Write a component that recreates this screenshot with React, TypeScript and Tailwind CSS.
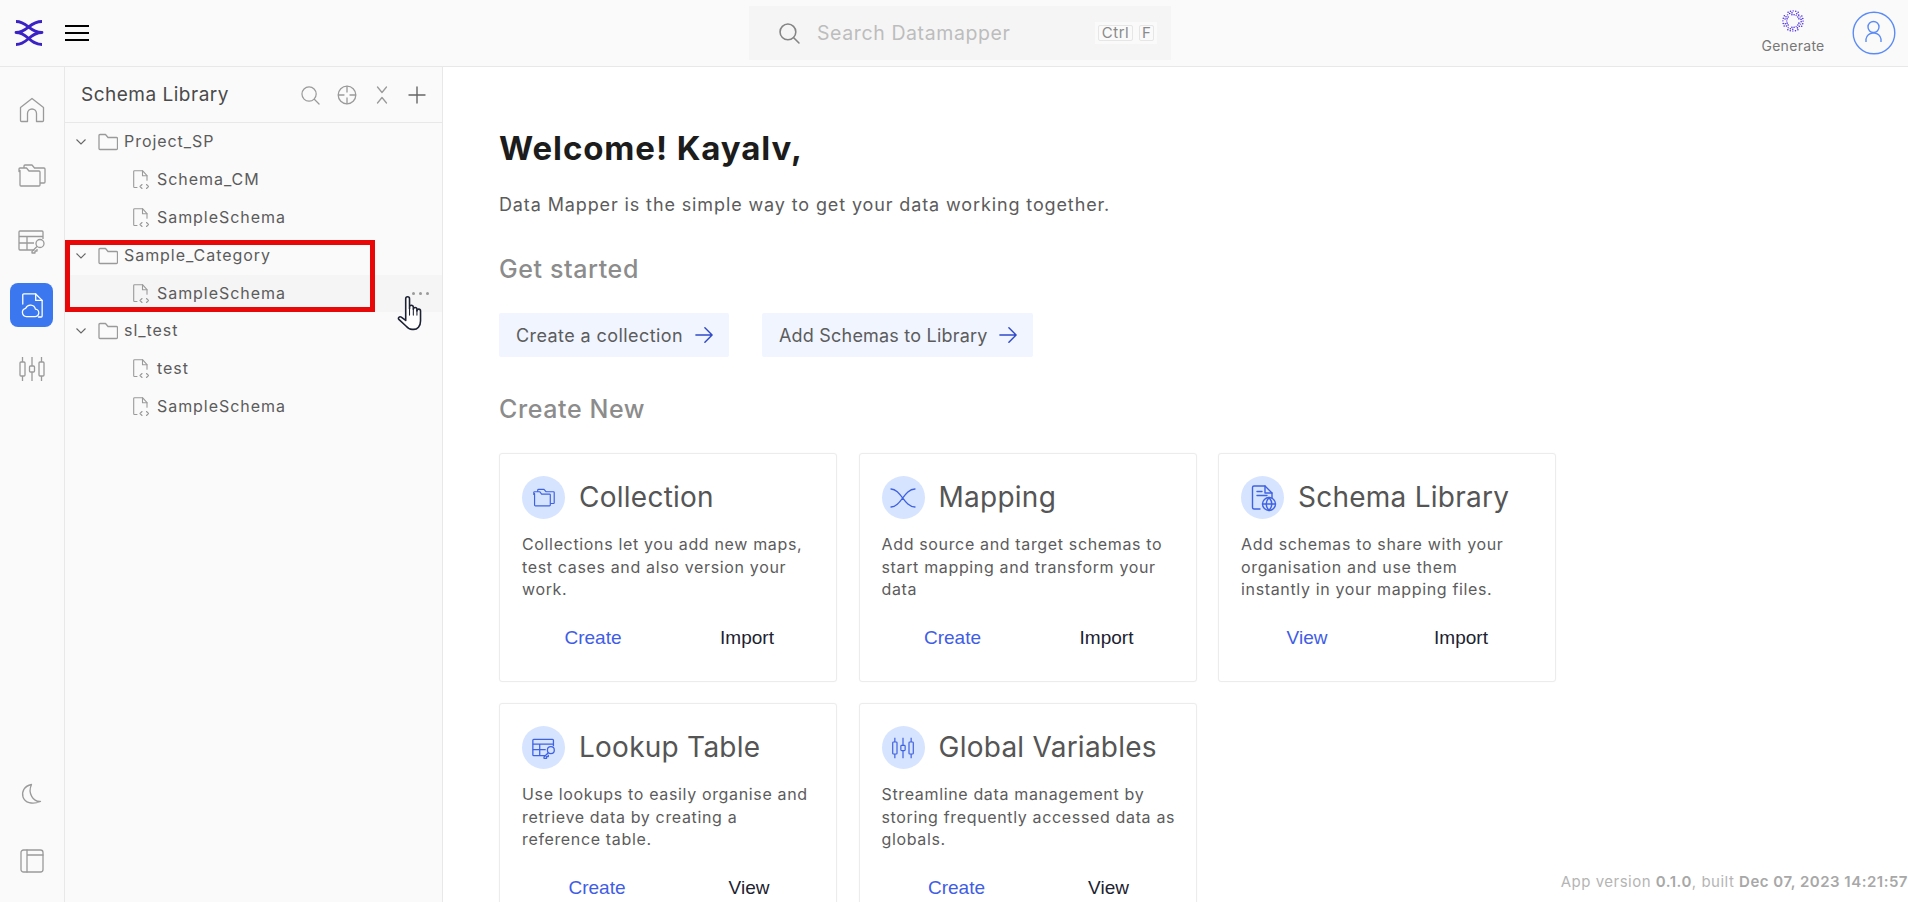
import React from "react";

const G = "#9a9a9a";
const B = "#3f62e0";

function Svg({ s, w, h, c = G, sw = 1.3, children }: any) {
  return (
    <svg width={s ?? w} height={s ?? h} viewBox={`0 0 ${s ?? w} ${s ?? h}`} fill="none" stroke={c} strokeWidth={sw} strokeLinecap="round" strokeLinejoin="round" className="shrink-0 block">
      {children}
    </svg>
  );
}

const Logo = () => (
  <Svg w={30} h={30} c="#3a22c4" sw={2.8}>
    <g strokeLinecap="butt">
      <path d="M28 3.500C15 3.500 14 14.500 2 14.500C14 14.500 15 26.500 28 26.500" />
      <path d="M2 3.500C14 3.500 15 14.500 28 14.500C15 14.500 14 26.500 2 26.500" />
    </g>
  </Svg>
);

const Burger = () => (
  <Svg w={24} h={18} c="#000" sw={2}>
    <g strokeLinecap="butt">
      <path d="M0 2h24M0 9h24M0 16h24" />
    </g>
  </Svg>
);

const Home = () => (
  <Svg s={26}>
    <path d="M1.500 10.500L13 1.500l11.500 9v13a1 1 0 0 1-1 1h-6v-8a3.500 3.500 0 0 0-9 0v8h-6a1 1 0 0 1-1-1z" />
  </Svg>
);
const Folders = ({ c = G, size = 28, sw = 1.3 }: any) => (
  <svg width={size} height={size} viewBox="0 0 28 28" fill="none" stroke={c} strokeWidth={sw} strokeLinejoin="round" className="shrink-0 block">
    <path d="M1 9.500a1 1 0 0 1 1-1h0V23a1 1 0 0 0 1 1h18a1 1 0 0 0 1-1V10a1 1 0 0 0-1-1H11L8.500 6H2a1 1 0 0 0-1 1z" />
    <path d="M6 6V4a1 1 0 0 1 1-1h7l2.500 3H26a1 1 0 0 1 1 1v13a1 1 0 0 1-1 1h-4" />
  </svg>
);
const TableKey = ({ c = G, size = 28, sw = 1.3 }: any) => (
  <svg width={size} height={size} viewBox="0 0 28 28" fill="none" stroke={c} strokeWidth={sw} strokeLinejoin="round" className="shrink-0 block">
    <path d="M16 23H2a1 1 0 0 1-1-1V5a1 1 0 0 1 1-1h22a1 1 0 0 1 1 1v7" />
    <path d="M1 9.500h24M1 16h15M9 9.500V23" />
    <circle cx="22" cy="16.500" r="4" />
    <path d="M19 19.500l-5 5v1.500h3v-2h2v-2" />
  </svg>
);
const Sliders = ({ c = G, size = 28, sw = 1.3 }: any) => (
  <svg width={size} height={size} viewBox="0 0 28 28" fill="none" stroke={c} strokeWidth={sw} strokeLinejoin="round" className="shrink-0 block">
    <rect x="2" y="7" width="5" height="14" rx="1" />
    <path d="M4.500 2v5M4.500 21v5" />
    <rect x="11.500" y="11" width="5" height="6" rx="1" />
    <path d="M14 2v9M14 17v9" />
    <rect x="21" y="7" width="5" height="14" rx="1" />
    <path d="M23.500 2v5M23.500 21v5" />
  </svg>
);
const SchemaActive = () => (
  <svg width="24" height="26" viewBox="0 0 26 28" fill="none" stroke="#fff" strokeWidth="1.400" strokeLinecap="round" strokeLinejoin="round" className="shrink-0 block">
    <path d="M3 13V3a1 1 0 0 1 1-1h13l7 7v17a1 1 0 0 1-1 1h-3" />
    <path d="M17 2v7h7" />
    <path d="M7 26.500a4.500 4.500 0 0 1-.8-8.900A5.500 5.500 0 0 1 16.700 18.500a4 4 0 0 1-.7 8z" />
  </svg>
);
const Moon = () => (
  <Svg s={22}>
    <path d="M10.500 1.500C3 3 .5 9 2 14c1.700 5.500 9 8 17.500 4.500C12 19 6.500 10 10.500 1.500z" />
  </Svg>
);
const LayoutIcon = () => (
  <Svg s={24}>
    <rect x="1" y="1" width="22" height="22" rx="2.500" />
    <path d="M7 1v22M7 6h16" />
  </Svg>
);
const Search = ({ s = 18, c = G, sw = 1.3 }: any) => (
  <svg width={s} height={s} viewBox="0 0 20 20" fill="none" stroke={c} strokeWidth={sw} strokeLinecap="round" className="shrink-0 block">
    <circle cx="8.500" cy="8.500" r="7.500" />
    <path d="M14 14l5 5" />
  </svg>
);
const Target = () => (
  <Svg s={20}>
    <circle cx="10" cy="10" r="8.800" />
    <path d="M10 1.500v5.500M10 13v5.500M1.500 10H7M13 10h5.500" />
  </Svg>
);
const Collapse = () => (
  <Svg s={18}>
    <path d="M4.500 1l4.500 5.500L13.500 1M4.500 17L9 11.500 13.500 17" />
  </Svg>
);
const Plus = () => (
  <Svg s={18} c="#666" sw={1.4}>
    <path d="M9 1v16M1 9h16" />
  </Svg>
);
const Chevron = () => (
  <svg width="10" height="6" viewBox="0 0 10 6" fill="none" stroke="#666" strokeWidth="1.100" className="shrink-0 block">
    <path d="M.5.500L5 5l4.500-4.500" />
  </svg>
);
const Folder = () => (
  <Svg w={20} h={18}>
    <path d="M1 2.500a1 1 0 0 1 1-1h5.500l2.500 3h8.500a1 1 0 0 1 1 1v10a1 1 0 0 1-1 1H2a1 1 0 0 1-1-1z" strokeLinecap="butt" />
  </Svg>
);
const FileCode = () => (
  <Svg w={18} h={20} sw={1.1}>
    <path d="M4 17.500H1.500a.8.800 0 0 1-.8-.800V1.500a.8.800 0 0 1 .8-.800H9.500l4.500 5v4.500" />
    <path d="M9.500.700v5h4.500" />
    <path d="M9 14.500l-2 2 2 2M13.500 14.500l2 2-2 2" />
  </Svg>
);
const MappingIcon = () => (
  <Svg s={26} c={B} sw={1.3}>
    <path d="M1 4c10 0 13 18 24 18M25 4C14 4 11 22 1 22" />
  </Svg>
);
const DocGlobe = () => (
  <Svg s={30} c={B} sw={1.4}>
    <path d="M12 26H6a1.500 1.500 0 0 1-1.500-1.500v-20A1.500 1.500 0 0 1 6 3h11l7 7v5" />
    <path d="M17 3v7h7M9 8.500h5M9 12.500h10" />
    <circle cx="21" cy="21" r="6.500" />
    <path d="M14.500 21h13M21 14.500c-3.500 4-3.500 9 0 13M21 14.500c3.500 4 3.500 9 0 13" />
  </Svg>
);
const ArrowR = () => (
  <svg width="18" height="18" viewBox="0 0 20 20" fill="none" stroke="#2f49c8" strokeWidth="1.600" strokeLinecap="round" strokeLinejoin="round" className="shrink-0 block">
    <path d="M1 10h17.500M11 2l8 8-8 8" />
  </svg>
);
const User = () => (
  <svg width="44" height="44" viewBox="0 0 44 44" fill="none" stroke="#5b8cf5" strokeWidth="1.400" className="shrink-0 block">
    <circle cx="22" cy="22" r="20.800" />
    <circle cx="21.500" cy="16" r="5.500" />
    <path d="M14 31v-3a7 7 0 0 1 7-6h1a7 7 0 0 1 7 6v3" />
  </svg>
);

function GenerateDots() {
  const dots: React.ReactElement[] = [];
  for (let r = 0; r < 3; r++) {
    const rad = 6.3 + r * 1.9;
    const n = 18 + r * 3;
    for (let i = 0; i < n; i++) {
      const a = (i / n) * Math.PI * 2 + r * 0.4;
      if ((i * 7 + r * 3) % 6 === 0) continue;
      dots.push(<circle key={`${r}-${i}`} cx={11 + rad * Math.cos(a)} cy={11 + rad * Math.sin(a)} r={0.78} fill={i % 3 === 0 ? "#8a6cf0" : "#4a2be0"} />);
    }
  }
  return <svg width="22" height="22" viewBox="0 0 22 22" className="block shrink-0">{dots}</svg>;
}

const Hand = () => (
  <svg width="28" height="36" viewBox="0 0 26 34" className="block" fill="#fff" stroke="#1d2233" strokeWidth="1.500" strokeLinejoin="round" strokeLinecap="round">
    <path d="M8 19V3.500a1.800 1.800 0 0 1 3.600 0V13l0-1.500a1.800 1.800 0 0 1 3.600 0V13.500a1.700 1.700 0 0 1 3.400 0V15a1.700 1.700 0 0 1 3.400 0v9.500c0 5-3 8-6.500 8h-1.500c-2.500 0-4-1.200-5.500-3L1.500 23c-1-1.300.7-3.200 2.300-2.100L8 24z" />
    <path d="M11.600 12v7M15.200 13v6M18.600 14.500V19" fill="none" strokeWidth="1" />
  </svg>
);

function FolderRow({ name }: { name: string }) {
  return (
    <div className="h-[37.9px] flex items-center relative">
      <div className="ml-[11px]"><Chevron /></div>
      <div className="ml-[12px]"><Folder /></div>
      <span className="ml-[6px] pb-[2px] text-[16px] tracking-[0.95px] text-[#5c5c5c] whitespace-nowrap">{name}</span>
    </div>
  );
}

function FileRow({ name, hover }: { name: string; hover?: boolean }) {
  return (
    <div className={`h-[37.9px] flex items-center pl-[68px] gap-[6px] relative ${hover ? "bg-[#f5f5f5]" : ""}`}>
      <FileCode />
      <span className="pb-[2px] text-[16px] tracking-[0.95px] text-[#5c5c5c]">{name}</span>
      {hover && (
        <div className="absolute left-[347px] top-[17px] flex gap-[4px]">
          <i className="w-[3px] h-[3px] rounded-full bg-[#9a9a9a]" />
          <i className="w-[3px] h-[3px] rounded-full bg-[#9a9a9a]" />
          <i className="w-[3px] h-[3px] rounded-full bg-[#9a9a9a]" />
        </div>
      )}
    </div>
  );
}

function Card({ icon, title, desc, a, b, ax, bx }: any) {
  return (
    <div className="bg-white border border-[#ececec] rounded-[3px] h-[229px] pl-[22px] pr-[10px] pt-[22px] shadow-[0_0_2px_rgba(0,0,0,0.03)]">
      <div className="flex items-center gap-[14px] h-[43px]">
        <div className="w-[43px] h-[43px] rounded-full bg-[#d6e4ff] flex items-center justify-center shrink-0">{icon}</div>
        <div className="text-[28px] leading-[43px] text-[#555] tracking-[0.25px] whitespace-nowrap">{title}</div>
      </div>
      <div className="mt-[14px] text-[16px] leading-[22.500px] text-[#5c5c5c] tracking-[0.65px] whitespace-pre-line h-[68px]">{desc}</div>
      <div className="relative mt-[25px] h-[24px] font-['Liberation_Sans',Arial,sans-serif] text-[19px] leading-[24px]">
        <span className="absolute -translate-x-1/2 text-[#3f5de6]" style={{ left: ax }}>{a}</span>
        <span className="absolute -translate-x-1/2 text-[#1c2230]" style={{ left: bx }}>{b}</span>
      </div>
    </div>
  );
}

export default function App() {
  return (
    <div className="relative w-[1908px] h-[902px] overflow-hidden bg-white font-['Inter',sans-serif] flex flex-col">
      <header className="h-[67px] shrink-0 bg-[#fafafa] border-b border-[#e8e8e8] flex items-center relative">
        <div className="ml-[14px] mt-[-1px]"><Logo /></div>
        <div className="ml-[21px] mt-[-1px]"><Burger /></div>
        <div className="absolute left-[749px] top-[6px] w-[422px] h-[54px] bg-[#f5f5f5] flex items-center pl-[30px]">
          <Search s={21} c="#858585" sw={1.500} />
          <span className="ml-[17px] pt-[1px] text-[19.500px] text-[#bdbdbd] tracking-[0.6px]">Search Datamapper</span>
          <div className="absolute left-[346px] top-[16px] w-[62px] h-[22px] bg-[#fafafa] flex items-center pl-[3px] gap-[6px] text-[15px] text-[#8a8a8a]">
            <span className="h-[16px] w-[35px] flex items-center justify-center border border-[#e6e6e6] rounded-[2px] tracking-[0.5px]">Ctrl</span>
            <span className="h-[16px] w-[15px] flex items-center justify-center border border-[#e6e6e6] rounded-[2px]">F</span>
          </div>
        </div>
        <div className="ml-auto flex items-center">
          <div className="w-[70px] flex flex-col items-center mt-[-3px] gap-[6px]">
            <GenerateDots />
            <span className="text-[14px] leading-[16px] text-[#777] tracking-[0.3px]">Generate</span>
          </div>
          <div className="ml-[24px] mr-[12px]"><User /></div>
        </div>
      </header>

      <div className="flex-1 flex min-h-0">
        <nav className="w-[65px] shrink-0 bg-[#fafafa] border-r border-[#e8e8e8] flex flex-col items-center pr-[1px]">
          <div className="h-[30px]" />
          <div className="h-[26px] flex items-center"><Home /></div>
          <div className="mt-[39px] h-[28px]"><Folders /></div>
          <div className="mt-[37px] h-[28px]"><TableKey /></div>
          <div className="mt-[28px] w-[43px] h-[44px] rounded-[8px] bg-[#3b78f0] flex items-center justify-center"><SchemaActive /></div>
          <div className="mt-[28px] h-[28px]"><Sliders /></div>
          <div className="mt-auto h-[22px]"><Moon /></div>
          <div className="mt-[44px] mb-[29px] h-[24px]"><LayoutIcon /></div>
        </nav>

        <aside className="w-[378px] shrink-0 bg-[#fafafa] border-r border-[#e8e8e8] flex flex-col">
          <div className="h-[56px] shrink-0 border-b border-[#e8e8e8] flex items-center pl-[16px] relative">
            <span className="pt-[2px] text-[19px] text-[#4a4a4a] tracking-[0.5px]">Schema Library</span>
            <div className="absolute left-[236px] top-[18px] flex items-center gap-[16.500px]">
              <Search s={19} />
              <Target />
              <Collapse />
              <Plus />
            </div>
          </div>
          <div>
            <FolderRow name="Project_SP" />
            <FileRow name="Schema_CM" />
            <FileRow name="SampleSchema" />
            <FolderRow name="Sample_Category" />
            <FileRow name="SampleSchema" hover />
            <FolderRow name="sl_test" />
            <FileRow name="test" />
            <FileRow name="SampleSchema" />
          </div>
        </aside>

        <main className="flex-1 min-w-0 bg-white pl-[56px] pt-[60px]">
          <h1 className="text-[33px] leading-[42px] font-bold text-[#1c1c1c] tracking-[0.9px]">Welcome! Kayalv,</h1>
          <p className="mt-[23px] text-[18px] leading-[26px] text-[#5c5c5c] tracking-[0.88px]">Data Mapper is the simple way to get your data working together.</p>
          <h2 className="mt-[35px] text-[25px] leading-[32px] font-medium text-[#8c8c8c] tracking-[0.6px]">Get started</h2>
          <div className="mt-[28px] flex gap-[33px]">
            <div className="h-[44px] w-[230px] bg-[#f0f5ff] rounded-[2px] flex items-center justify-between pl-[17px] pr-[16px] text-[18px] text-[#5c5c5c] tracking-[0.42px]">
              Create a collection <ArrowR />
            </div>
            <div className="h-[44px] w-[271px] bg-[#f0f5ff] rounded-[2px] flex items-center justify-between pl-[17px] pr-[16px] text-[18px] text-[#5c5c5c] tracking-[0.2px]">
              Add Schemas to Library <ArrowR />
            </div>
          </div>
          <h2 className="mt-[36px] text-[25px] leading-[32px] font-medium text-[#8c8c8c] tracking-[0.6px]">Create New</h2>
          <div className="mt-[28px] grid grid-cols-[338px_338px_338px] gap-x-[21.500px] gap-y-[21px]">
            <Card icon={<Folders c={B} size={22} sw={1.500} />} title="Collection" desc={"Collections let you add new maps,\ntest cases and also version your\nwork."} a="Create" b="Import" ax={71} bx={225} />
            <Card icon={<MappingIcon />} title="Mapping" desc={"Add source and target schemas to\nstart mapping and transform your\ndata"} a="Create" b="Import" ax={71} bx={225} />
            <Card icon={<DocGlobe />} title="Schema Library" desc={"Add schemas to share with your\norganisation and use them\ninstantly in your mapping files."} a="View" b="Import" ax={66} bx={220} />
            <Card icon={<TableKey c={B} size={24} sw={1.500} />} title="Lookup Table" desc={"Use lookups to easily organise and\nretrieve data by creating a\nreference table."} a="Create" b="View" ax={75} bx={227} />
            <Card icon={<Sliders c={B} size={24} sw={1.400} />} title="Global Variables" desc={"Streamline data management by\nstoring frequently accessed data as\nglobals."} a="Create" b="View" ax={75} bx={227} />
          </div>
        </main>
      </div>

      <div className="absolute right-0 top-[871px] text-[15px] leading-[22px] text-[#b5b5b5] whitespace-nowrap tracking-[0.5px]">
        App version <b className="font-semibold text-[#a8a8a8]">0.1.0</b>, built <b className="font-semibold text-[#a8a8a8]">Dec 07, 2023 14:21:57</b>
      </div>

      {/* annotation rectangle and pointer lying over the list */}
      <div className="absolute left-[65px] top-[240px] w-[310px] h-[72px] border-[5px] border-[#e80808] pointer-events-none" />
      <div className="absolute left-[397px] top-[295px]"><Hand /></div>
    </div>
  );
}
